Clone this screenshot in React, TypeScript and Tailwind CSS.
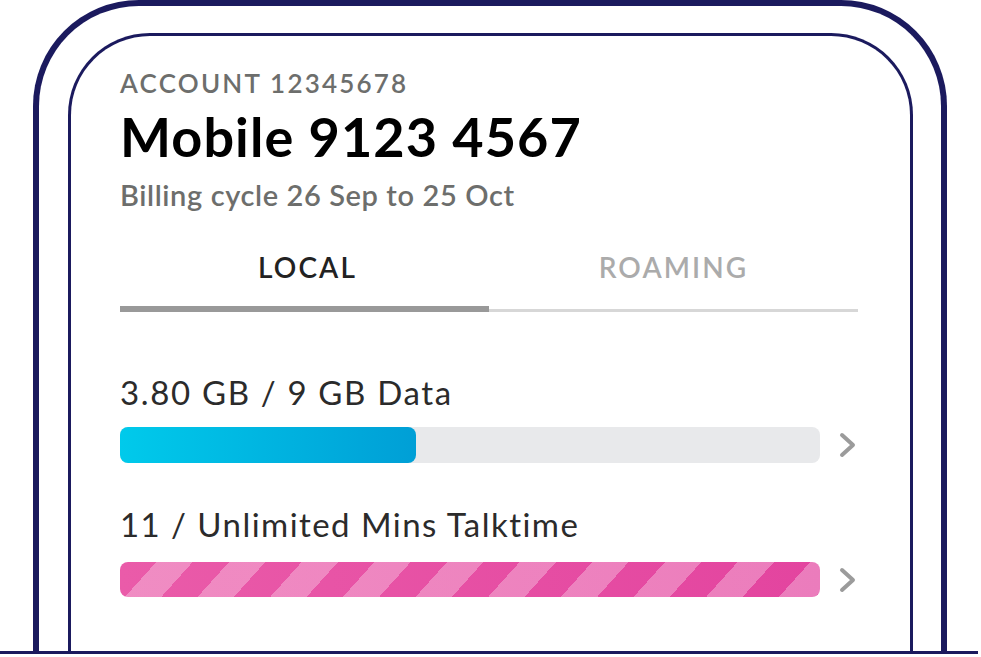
const STRIPES =
  'bg-[repeating-linear-gradient(132deg,transparent_0px,transparent_27px,rgba(255,255,255,0.3)_27px,rgba(255,255,255,0.3)_54px),linear-gradient(to_right,#ea5ba9,#e3449f)]';

function Chevron() {
  return (
    <svg width="20" height="26" viewBox="0 0 20 26" className="shrink-0">
      <path d="M4 3 L15 13 L4 23" fill="none" stroke="#9b9b9b" strokeWidth="4" strokeLinecap="round" strokeLinejoin="round" />
    </svg>
  );
}

export default function App() {
  return (
    <div className="flex h-[657px] w-[981px] flex-col overflow-hidden bg-white font-['Lato',sans-serif]">
      <div className="ml-[33px] h-[651px] w-[914px] shrink-0 rounded-t-[106px] border-[6px] border-b-0 border-[#1b1a5e] pl-[29px] pr-[28px] pt-[27px]">
        <div className="flex h-full flex-col rounded-t-[82px] border-[3px] border-b-0 border-[#1b1a5e] pl-[49px] pr-[52px]">
          <p className="mt-[34px] text-[26px] font-semibold leading-none tracking-[0.085em] text-[#6d6e6c]">ACCOUNT 12345678</p>
          <h1 className="mt-[14px] text-[54px] font-bold leading-none tracking-[0.02em] text-black">Mobile 9123 4567</h1>
          <p className="mt-[16px] text-[29px] font-semibold leading-none tracking-[0.021em] text-[#6d6e6c]">Billing cycle 26 Sep to 25 Oct</p>

          <div className="mt-[44px] grid grid-cols-2">
            <div className="flex flex-col">
              <span className="pl-[6px] text-center text-[28px] font-semibold leading-none tracking-[0.075em] text-[#222222]">LOCAL</span>
              <div className="mt-[25px] h-[6px] bg-[#999999]" />
            </div>
            <div className="flex flex-col">
              <span className="text-center text-[28px] font-semibold leading-none tracking-[0.075em] text-[#ababab]">ROAMING</span>
              <div className="mt-[28px] h-[3px] bg-[#d7d7d7]" />
            </div>
          </div>

          <p className="mt-[64px] text-[33px] leading-none tracking-[0.05em] text-[#2b2b2b]">3.80 GB / 9 GB Data</p>
          <div className="mt-[18px] flex items-center gap-[18px]">
            <div className="h-[36px] w-[700px] rounded-[8px] bg-[#e8e9eb]">
              <div className="h-full w-[296px] rounded-[8px] bg-linear-to-r from-[#00caeb] to-[#009fd6]" />
            </div>
            <Chevron />
          </div>

          <p className="mt-[45px] text-[33px] leading-none tracking-[0.044em] text-[#2b2b2b]">11 / Unlimited Mins Talktime</p>
          <div className="mt-[21px] flex items-center gap-[18px]">
            <div className={`h-[35px] w-[700px] rounded-[8px] ${STRIPES}`} />
            <Chevron />
          </div>
        </div>
      </div>
      <div className="h-[3px] w-[978px] shrink-0 bg-[#1b1a5e]" />
    </div>
  );
}
